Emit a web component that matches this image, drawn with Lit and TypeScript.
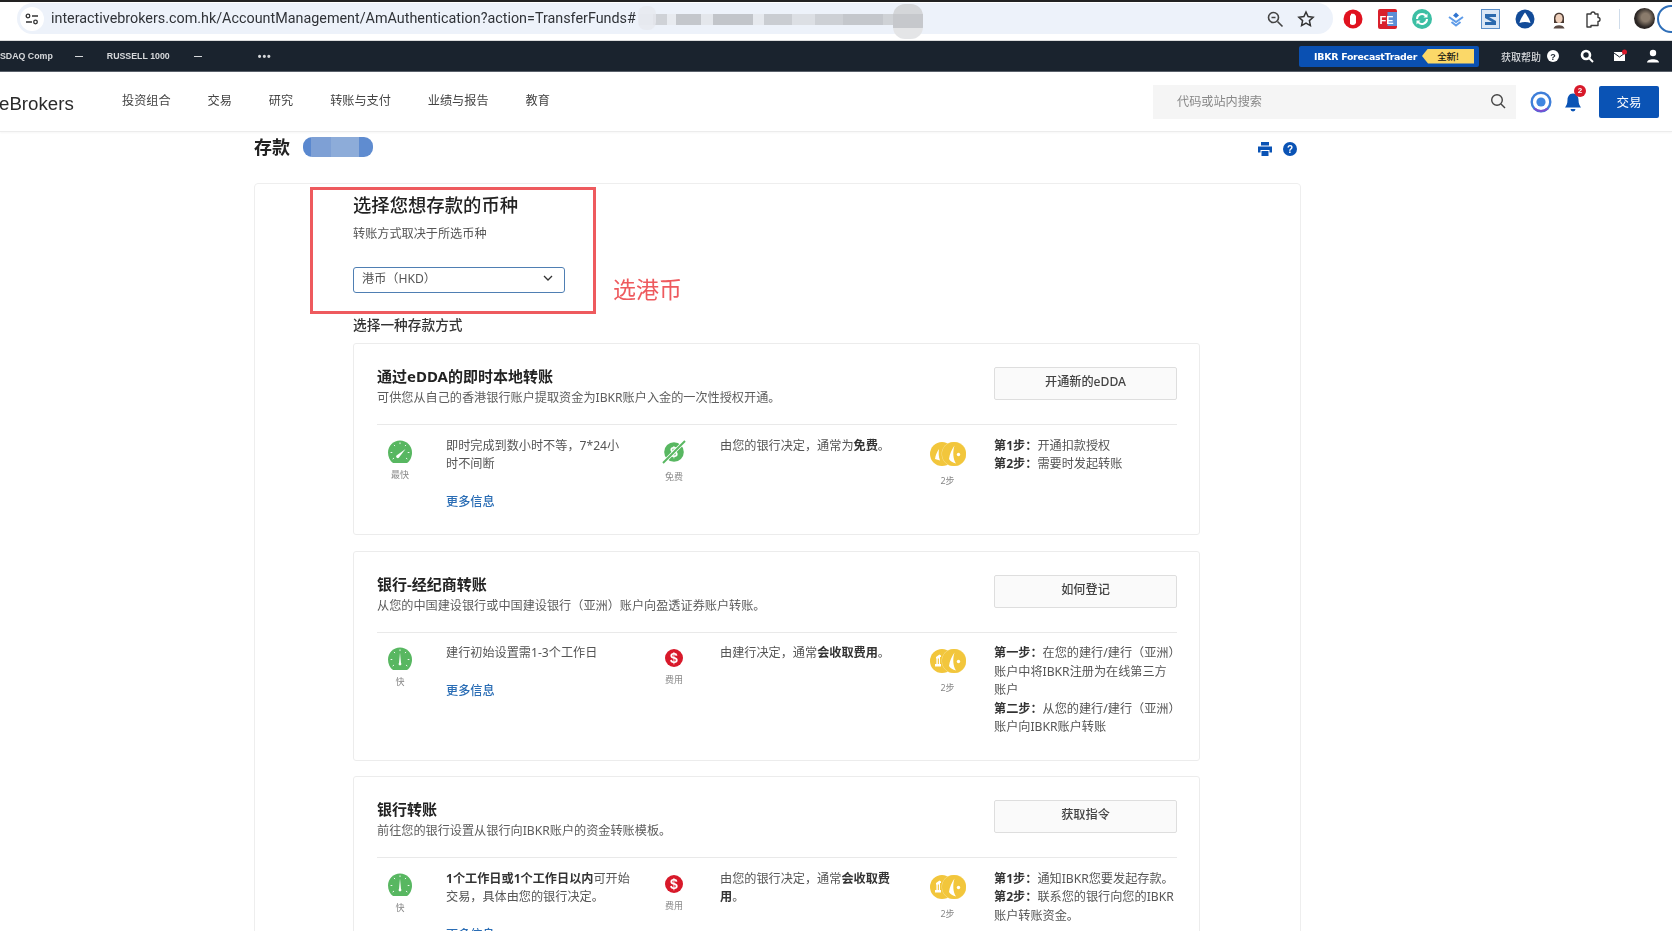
import { LitElement, html, css, svg } from 'lit';
import { customElement } from 'lit/decorators.js';

const speedIcon = (fast: boolean) => html`<svg width="24" height="24" viewBox="0 0 24 24">
  <path d="M5 23 C2 21 0 17 0 12.5 C0 5.6 5.4 0.5 12 0.5 C18.6 0.5 24 5.6 24 12.5 C24 17 22 21 19 23 Z" fill="#58b761" />
  <g stroke="#fff" stroke-width="1" stroke-linecap="round" fill="none" opacity="0.9">
    <path d="M12 2.8v.9M6.2 5.2l.6.6M17.8 5.2l-.6.6M3 12.5h.9M20.1 12.5h.9M5 18.8l.7-.5M19 18.8l-.7-.5" />
  </g>
  ${fast
    ? svg`<path d="M8.5 15.5 L17.5 9 L11 17.5 A1.6 1.6 0 0 1 8.5 15.5 Z" fill="#fff" />`
    : svg`<path d="M11 16 L12 5.5 L13 16 A1.4 1.4 0 1 1 11 16 Z" fill="#fff" />`}
</svg>`;

const freeIcon = html`<svg width="26" height="24" viewBox="0 0 26 24">
  <circle cx="13" cy="12" r="9.8" fill="#58b761" />
  <text x="13" y="17" text-anchor="middle" font-size="14" font-weight="700" font-family="Liberation Sans" fill="#fff">$</text>
  <path d="M2 23 L24 1" stroke="#fff" stroke-width="3.6" />
  <path d="M2 23 L24 1" stroke="#58b761" stroke-width="2" />
</svg>`;

const feeIcon = html`<svg width="18" height="18" viewBox="0 0 18 18">
  <circle cx="9" cy="9" r="9" fill="#d8192a" />
  <text x="9" y="14" text-anchor="middle" font-size="14" font-weight="700" font-family="Liberation Sans" fill="#fff">$</text>
</svg>`;

const coinsIcon = (bank: boolean) => html`<svg width="36" height="24" viewBox="0 0 36 24">
  <circle cx="12" cy="12" r="12" fill="#f2c63c" />
  <circle cx="24" cy="12" r="12.4" fill="#f8e39a" />
  <circle cx="24" cy="12" r="12" fill="#f2c63c" />
  ${bank
    ? svg`<path d="M6 8 L9.5 5.5 L11 6.5 V8 H10 V15 H11 V17.5 H5 V15 H6.4 V9.5 H6 Z M7.8 9.5 V15 H8.9 V9.5 Z" fill="#fff" />`
    : svg`<path d="M9 7 C7 10 5.5 13 5 17 L10 18.5 C8.5 15 8.5 11 9 7 Z" fill="#fff" />`}
  <path d="M24.5 3.5 C22 7 19.5 12 19 17 C20 19 23 21 26 21.5 C23 17 22.5 10 24.5 3.5 Z" fill="#fff" />
  <circle cx="28.5" cy="12.5" r="1.7" fill="#fff" />
</svg>`;

interface Cell {
  icon: unknown;
  label: string;
  kind: string;
  text: unknown;
  link?: boolean;
}

interface Method {
  title: string;
  desc: string;
  action: string;
  cells: Cell[];
}

const methods: Method[] = [
  {
    title: '通过eDDA的即时本地转账',
    desc: '可供您从自己的香港银行账户提取资金为IBKR账户入金的一次性授权开通。',
    action: '开通新的eDDA',
    cells: [
      { icon: speedIcon(true), label: '最快', kind: 'speed', text: html`即时完成到数小时不等，7*24小<br />时不间断`, link: true },
      { icon: freeIcon, label: '免费', kind: 'free', text: html`由您的银行决定，通常为<b>免费</b>。` },
      { icon: coinsIcon(false), label: '2步', kind: 'steps', text: html`<b>第1步：</b>开通扣款授权<br /><b>第2步：</b>需要时发起转账` },
    ],
  },
  {
    title: '银行-经纪商转账',
    desc: '从您的中国建设银行或中国建设银行（亚洲）账户向盈透证券账户转账。',
    action: '如何登记',
    cells: [
      { icon: speedIcon(false), label: '快', kind: 'speed', text: html`建行初始设置需1-3个工作日`, link: true },
      { icon: feeIcon, label: '费用', kind: 'fee', text: html`由建行决定，通常<b>会收取费用</b>。` },
      {
        icon: coinsIcon(true),
        label: '2步',
        kind: 'steps',
        text: html`<b>第一步：</b>在您的建行/建行（亚洲）<br />账户中将IBKR注册为在线第三方<br />账户<br /><b>第二步：</b>从您的建行/建行（亚洲）<br />账户向IBKR账户转账`,
      },
    ],
  },
  {
    title: '银行转账',
    desc: '前往您的银行设置从银行向IBKR账户的资金转账模板。',
    action: '获取指令',
    cells: [
      { icon: speedIcon(false), label: '快', kind: 'speed', text: html`<b>1个工作日或1个工作日以内</b>可开始<br />交易，具体由您的银行决定。`, link: true },
      { icon: feeIcon, label: '费用', kind: 'fee', text: html`由您的银行决定，通常<b>会收取费<br />用</b>。` },
      { icon: coinsIcon(true), label: '2步', kind: 'steps', text: html`<b>第1步：</b>通知IBKR您要发起存款。<br /><b>第2步：</b>联系您的银行向您的IBKR<br />账户转账资金。` },
    ],
  },
];

const extensions = [
  html`<svg width="20" height="20" viewBox="0 0 20 20"><circle cx="10" cy="10" r="9.5" fill="#e0121f" /><path d="M7 15 V7.5 Q7 6 8 6 V5 Q9 3.8 10 5 Q11.5 4.4 12 6 Q13.4 6.4 13 8 V14 Q12 16 10 16 Q8 16 7 15 Z" fill="#fff" /></svg>`,
  html`<svg width="19" height="20" viewBox="0 0 19 20"><rect width="19" height="20" rx="2" fill="#d9202c" /><rect x="9.5" y="3" width="9.5" height="14" fill="#5d8fd6" /><text x="1.6" y="14.5" font-size="11" font-weight="700" font-family="Liberation Sans" fill="#fff">FE</text></svg>`,
  html`<svg width="20" height="20" viewBox="0 0 20 20"><circle cx="10" cy="10" r="10" fill="#3cbfa4" /><path d="M5 10 A5 5 0 0 1 14 7 M15 10 A5 5 0 0 1 6 13" stroke="#fff" stroke-width="2" fill="none" /><path d="M15.5 4.5 V8.5 H11.5 Z M4.5 15.5 V11.5 H8.5 Z" fill="#fff" /></svg>`,
  html`<svg width="20" height="20" viewBox="0 0 20 20"><path d="M3 8 L10 13 L17 8 M5.5 13 L10 16.5 L14.5 13" stroke="#5f9ce8" stroke-width="2" fill="none" /><path d="M10 3.5 L13 6.5 L10 9 L7 6.5 Z" fill="#2f74d0" /></svg>`,
  html`<svg width="19" height="20" viewBox="0 0 19 20"><rect x=".5" y=".5" width="18" height="19" fill="#dbe7f5" stroke="#5b8fc9" /><path d="M4 5 H15 V8 H8 L15 12 V16 H4 V13 H11 L4 9 Z" fill="#2b69ad" /></svg>`,
  html`<svg width="20" height="20" viewBox="0 0 20 20"><circle cx="10" cy="10" r="9.5" fill="#124b98" /><path d="M10 3.5 C12 6 15 11 15.5 14 C12 12.5 8 12.5 4.5 14 C5 11 8 6 10 3.5 Z" fill="#fff" /></svg>`,
  html`<svg width="16" height="20" viewBox="0 0 16 20"><path d="M3 9 C3 2 13 2 13 9 L13 14 H3 Z" fill="#4a3a32" /><ellipse cx="8" cy="9.5" rx="3.6" ry="4.6" fill="#eecfba" /><path d="M2.5 19.5 C3 15 13 15 13.5 19.5 Z" fill="#5a4a44" /></svg>`,
  html`<svg width="20" height="20" viewBox="0 0 20 20"><path d="M4 5 H8 A2 2 0 0 1 12 5 H15 V8.5 A2 2 0 0 1 15 12.5 V16.5 H8 V18 H4 Z" stroke="#3c3c3c" stroke-width="1.4" fill="#fff" stroke-linejoin="round" /></svg>`,
];

@customElement('app-root')
export class AppRoot extends LitElement {
  static styles = css`
    :host {
      display: block;
      width: 1672px;
      height: 931px;
      overflow: hidden;
      background: #fff;
      color: #555;
      font-family: 'Noto Sans', 'Noto Sans CJK SC', sans-serif;
      font-size: 12.15px;
    }
    .shot {
      filter: blur(0.35px);
      height: 931px;
      overflow: hidden;
    }

    /* browser chrome */
    .chrome {
      display: flex;
      align-items: center;
      box-sizing: border-box;
      height: 41px;
      border-top: 2px solid #222;
      border-bottom: 1px solid #dcdcdc;
      padding: 0 0 5px 17px;
      overflow: hidden;
    }
    .pill {
      position: relative;
      display: flex;
      align-items: center;
      box-sizing: border-box;
      width: 1316px;
      height: 31px;
      flex: none;
      border-radius: 16px;
      background: #edf2fa;
      padding: 0 18px 0 3px;
    }
    .tune {
      width: 24px;
      height: 24px;
      border-radius: 50%;
      background: #fff;
      display: flex;
      align-items: center;
      justify-content: center;
      flex: none;
    }
    .url {
      margin-left: 7px;
      font: 14.35px 'Roboto', sans-serif;
      color: #303338;
      white-space: nowrap;
    }
    .pill-tools {
      margin-left: auto;
      display: flex;
      align-items: center;
      gap: 13px;
    }
    .mosaic {
      position: absolute;
      left: 622px;
      top: 0;
      width: 284px;
      height: 31px;
      background: linear-gradient(90deg, #e6e9ef 0 5%, #cfd2d7 5% 10%, #e8ebf0 10% 13%, #c4c7cc 13% 22%, #e4e7ec 22% 26%, #c2c5ca 26% 40%, #e6e9ee 40% 44%, #cacdd2 44% 54%, #dcdfe4 54% 62%, #cdd0d5 62% 72%, #c4c7cc 72% 86%, #cfd2d6 86% 100%) 0 11px / 100% 11px no-repeat;
    }
    .mosaic::before {
      content: '';
      position: absolute;
      left: -1px;
      top: 3px;
      width: 18px;
      height: 24px;
      border-radius: 8px;
      background: #e6e9ef;
      opacity: 0.8;
    }
    .mosaic::after {
      content: '';
      position: absolute;
      right: 0;
      top: 1px;
      width: 30px;
      height: 35px;
      border-radius: 12px;
      background: linear-gradient(#d4d6d9 0 28%, #c6c8cc 28% 68%, #e4e5e7 68%);
    }
    .exts {
      display: flex;
      margin-left: 3px;
      flex: none;
    }
    .ext {
      width: 34.3px;
      display: flex;
      justify-content: center;
      align-items: center;
    }
    .sep {
      width: 1px;
      height: 20px;
      background: #cfdcea;
      margin-left: 9px;
      flex: none;
    }
    .me {
      width: 21px;
      height: 21px;
      border-radius: 50%;
      background: radial-gradient(circle at 55% 45%, #8a7b6c 0 25%, #2b2624 60%);
      margin-left: 14px;
      flex: none;
    }
    .ring {
      width: 28px;
      height: 28px;
      box-sizing: border-box;
      border: 2px solid #2f6fb8;
      border-radius: 50%;
      margin-left: 2px;
      flex: none;
    }

    /* ticker bar */
    .ticker {
      display: flex;
      align-items: center;
      box-sizing: border-box;
      height: 31px;
      padding-right: 12px;
      background: #1a232e;
      border-bottom: 1px solid #59606a;
      color: #d6d8db;
      font: 700 8.8px 'Liberation Sans', sans-serif;
      white-space: nowrap;
    }
    .ticker .cn {
      font: 500 10px 'Noto Sans CJK SC', sans-serif;
    }
    .dash {
      margin-left: 22px;
      width: 8px;
      height: 1px;
      background: #d6d8db;
    }
    .russell {
      margin-left: 24px;
    }
    .dash.second {
      margin-left: 24px;
    }
    .dots {
      margin-left: 56px;
      font-size: 10.5px;
      letter-spacing: 1px;
    }
    .forecast {
      margin-left: auto;
      display: flex;
      align-items: center;
      justify-content: space-between;
      box-sizing: border-box;
      width: 180px;
      height: 21px;
      background: #0a50b2;
      border-radius: 2px;
      padding: 0 5px 0 15px;
      color: #fff;
      font: 700 9.4px 'DejaVu Sans', sans-serif;
      letter-spacing: -0.25px;
    }
    .new-tag {
      display: flex;
      align-items: center;
      justify-content: center;
      width: 52px;
      height: 15px;
      background: #fbd868;
      color: #111;
      font: 500 9.5px 'Noto Sans CJK SC', sans-serif;
      clip-path: polygon(6px 0, 100% 0, 100% 100%, 6px 100%, 0 50%);
    }
    .help-cn {
      margin-left: 22px;
    }
    .ticker-tools {
      display: flex;
      align-items: center;
    }
    .ticker-tools svg {
      flex: none;
    }
    .help-dot { margin-left: 6px; }
    .tool-chat { margin-left: 21px; }
    .tool-mail { margin-left: 19px; }
    .tool-user { margin-left: 19px; }

    /* nav */
    .nav {
      display: flex;
      align-items: center;
      box-sizing: border-box;
      height: 60px;
      border-bottom: 1px solid #ececec;
      box-shadow: 0 1px 2px rgba(0, 0, 0, 0.04);
    }
    .logo {
      font: 18.7px 'Liberation Sans', sans-serif;
      color: #2a2a2a;
      margin: 5px 0 0 -1px;
      width: 123px;
      flex: none;
    }
    .menu {
      display: flex;
      gap: 37px;
      color: #444;
      margin-bottom: 4px;
    }
    .search {
      margin-left: auto;
      display: flex;
      align-items: center;
      justify-content: space-between;
      box-sizing: border-box;
      width: 363px;
      height: 34px;
      background: #f5f5f5;
      padding: 0 10px 1px 24px;
      color: #888;
    }
    .nav-ring {
      margin-left: 14px;
      display: flex;
    }
    .bell {
      position: relative;
      margin-left: 12px;
      display: flex;
    }
    .badge {
      position: absolute;
      top: -7px;
      right: -4px;
      width: 12px;
      height: 12px;
      border-radius: 50%;
      background: #d8192a;
      color: #fff;
      font: 700 8px/12px 'Liberation Sans', sans-serif;
      text-align: center;
    }
    .trade {
      margin: 0 13px 0 17px;
      width: 60px;
      height: 32px;
      border-radius: 2px;
      background: #0a53b5;
      color: #fff;
      display: flex;
      align-items: center;
      justify-content: center;
      font-size: 12.5px;
    }

    /* page */
    .page {
      width: 1047px;
      margin-left: 254px;
    }
    .page-title {
      display: flex;
      align-items: center;
      box-sizing: border-box;
      height: 51px;
      padding: 0 4px 22px 0;
    }
    .page-title h1 {
      margin: 0;
      font-size: 18px;
      line-height: 24px;
      font-weight: 700;
      color: #222;
    }
    .account {
      width: 70px;
      height: 20px;
      margin-left: 13px;
      border-radius: 9px;
      background: linear-gradient(90deg, #5a88cf 0 12%, #7ea0d5 12% 40%, #8dacd9 40% 80%, #5f8cd0 80%);
    }
    .page-tools {
      margin-left: auto;
      display: flex;
      align-items: center;
      gap: 11px;
      padding-top: 5px;
    }
    .panel {
      position: relative;
      box-sizing: border-box;
      border: 1px solid #eee;
      border-radius: 4px;
      padding: 9px 100px 0 98px;
    }
    .panel h2 {
      margin: 0;
      font-size: 18.35px;
      line-height: 24px;
      font-weight: 500;
      color: #222;
    }
    .hint {
      margin-top: 8px;
      line-height: 18px;
      color: #555;
    }
    .select {
      display: flex;
      align-items: center;
      justify-content: space-between;
      box-sizing: border-box;
      width: 212px;
      height: 26px;
      margin-top: 24px;
      padding: 0 11px 4px 8px;
      border: 1px solid #4f7fb3;
      border-radius: 3px;
      color: #555;
    }
    .pick {
      margin-top: 23px;
      line-height: 18px;
      font-size: 13.7px;
      color: #333;
      font-weight: 500;
    }
    .red-box {
      position: absolute;
      left: 55px;
      top: 3px;
      box-sizing: border-box;
      width: 286px;
      height: 127px;
      border: 3px solid #ee5a5e;
    }
    .note {
      position: absolute;
      left: 358px;
      top: 89px;
      font-size: 23px;
      line-height: 32px;
      color: #ee5a5e;
    }
    .method {
      box-sizing: border-box;
      border: 1px solid #ececec;
      border-radius: 3px;
      margin-top: 15.5px;
      padding: 22px 22px 23px 23px;
    }
    .method.first {
      margin-top: 9px;
    }
    .head {
      display: flex;
      justify-content: space-between;
      align-items: flex-start;
      padding-bottom: 17px;
      border-bottom: 1px solid #e9e9e9;
    }
    .head h3 {
      margin: 0;
      font-size: 15px;
      line-height: 20px;
      font-weight: 700;
      color: #222;
    }
    .head p {
      margin: 3px 0 0;
      line-height: 18px;
      color: #5c5c5c;
    }
    .action {
      box-sizing: border-box;
      width: 183px;
      height: 33px;
      margin-top: 1px;
      border: 1px solid #dedede;
      border-radius: 2px;
      background: #fafafa;
      color: #444;
      font-weight: 500;
      text-align: center;
      line-height: 28px;
    }
    .row {
      display: grid;
      grid-template-columns: 46px 182px 46px 181px 47px 1fr;
      column-gap: 23px;
      padding-top: 11.5px;
    }
    .badge-cell {
      display: flex;
      flex-direction: column;
      align-items: center;
      font-size: 9px;
      line-height: 12px;
      color: #888;
    }
    .badge-cell span {
      display: block;
    }
    .speed { padding-top: 3px; gap: 5px; }
    .free { padding-top: 3px; gap: 7px; }
    .fee { padding-top: 5px; gap: 7px; }
    .steps { padding-top: 5px; gap: 9px; }
    .text {
      line-height: 18.5px;
      white-space: nowrap;
    }
    .text b {
      font-weight: 700;
      color: #333;
    }
    .more {
      display: block;
      margin-top: 19px;
      line-height: 18.5px;
      color: #2a6db5;
      font-weight: 500;
    }
  `;

  renderCell(c: Cell) {
    return html`
      <div class="badge-cell ${c.kind}">${c.icon}<span>${c.label}</span></div>
      <div class="text">
        ${c.text}${c.link ? html`<a class="more">更多信息</a>` : ''}
      </div>
    `;
  }

  renderMethod(m: Method, i: number) {
    return html`<section class="method ${i === 0 ? 'first' : ''}">
      <div class="head">
        <div>
          <h3>${m.title}</h3>
          <p>${m.desc}</p>
        </div>
        <div class="action">${m.action}</div>
      </div>
      <div class="row">${m.cells.map((c) => this.renderCell(c))}</div>
    </section>`;
  }

  render() {
    return html`<div class="shot">
      <div class="chrome">
        <div class="pill">
          <span class="tune">
            <svg width="14" height="12" viewBox="0 0 14 12" fill="none" stroke="#333" stroke-width="1.3">
              <circle cx="3" cy="3" r="1.8" /><path d="M7 3h6M1 9h6" /><circle cx="10.5" cy="9" r="1.8" />
            </svg>
          </span>
          <span class="url">interactivebrokers.com.hk/AccountManagement/AmAuthentication?action=TransferFunds#</span>
          <div class="mosaic"></div>
          <div class="pill-tools">
            <svg width="18" height="18" viewBox="0 0 18 18" fill="none" stroke="#444" stroke-width="1.6">
              <circle cx="7.5" cy="7.5" r="5" /><path d="M5.5 7.5h4M11.5 11.5l5 5" />
            </svg>
            <svg width="18" height="18" viewBox="0 0 18 18" fill="none" stroke="#333" stroke-width="1.5">
              <path d="M9 2l2.1 4.6 5 .6-3.7 3.4 1 5L9 13.1 4.6 15.6l1-5L1.9 7.2l5-.6z" />
            </svg>
          </div>
        </div>
        <div class="exts">${extensions.map((e) => html`<span class="ext">${e}</span>`)}</div>
        <span class="sep"></span>
        <span class="me"></span>
        <span class="ring"></span>
      </div>

      <div class="ticker">
        <span>SDAQ Comp</span>
        <span class="dash"></span>
        <span class="russell">RUSSELL 1000</span>
        <span class="dash second"></span>
        <span class="dots">•••</span>
        <div class="forecast">
          IBKR ForecastTrader
          <span class="new-tag">全新!</span>
        </div>
        <span class="cn help-cn">获取帮助</span>
        <div class="ticker-tools">
          <svg class="help-dot" width="12" height="12" viewBox="0 0 12 12">
            <circle cx="6" cy="6" r="6" fill="#fff" />
            <text x="6" y="9.5" text-anchor="middle" font-size="9" font-weight="700" font-family="Liberation Sans" fill="#1a232e">?</text>
          </svg>
          <svg class="tool-chat" width="14" height="14" viewBox="0 0 14 14">
            <circle cx="6" cy="6" r="4" fill="none" stroke="#fff" stroke-width="2.6" />
            <path d="M9 9l4 4" stroke="#fff" stroke-width="2" />
          </svg>
          <svg class="tool-mail" width="14" height="14" viewBox="0 0 14 14">
            <rect x="1" y="3" width="11" height="9" fill="#fff" />
            <path d="M1 4l5.5 4L12 4" stroke="#1a232e" fill="none" />
            <circle cx="11.5" cy="3" r="2.5" fill="#d8192a" />
          </svg>
          <svg class="tool-user" width="14" height="14" viewBox="0 0 14 14" fill="#fff">
            <circle cx="7" cy="4" r="3.2" /><path d="M1 13.5 C1 9 13 9 13 13.5 Z" />
          </svg>
        </div>
      </div>

      <div class="nav">
        <span class="logo">eBrokers</span>
        <div class="menu">
          <span>投资组合</span><span>交易</span><span>研究</span><span>转账与支付</span><span>业绩与报告</span><span>教育</span>
        </div>
        <div class="search">
          <span>代码或站内搜索</span>
          <svg width="16" height="16" viewBox="0 0 16 16" fill="none" stroke="#444" stroke-width="1.4">
            <circle cx="7" cy="7" r="5.3" /><path d="M11 11l4 4" />
          </svg>
        </div>
        <span class="nav-ring">
          <svg width="22" height="22" viewBox="0 0 22 22" fill="none">
            <circle cx="11" cy="11" r="9.3" stroke="#3f7fd9" stroke-width="2.4" />
            <path d="M4.5 17.5 A9.3 9.3 0 0 0 17.5 17.5" stroke="#7a4fd0" stroke-width="2.4" />
            <circle cx="11" cy="11" r="4.6" fill="#3f86e0" />
          </svg>
        </span>
        <span class="bell">
          <svg width="18" height="20" viewBox="0 0 18 20" fill="#0a53b5">
            <path d="M9 1.5 C5 1.5 3.5 5 3.5 8 C3.5 12 2 14 1 15.5 H17 C16 14 14.5 12 14.5 8 C14.5 5 13 1.5 9 1.5 Z" />
            <path d="M6.5 17 A2.5 2.5 0 0 0 11.5 17 Z" />
          </svg>
          <span class="badge">2</span>
        </span>
        <div class="trade">交易</div>
      </div>

      <div class="page">
        <div class="page-title">
          <h1>存款</h1>
          <span class="account"></span>
          <div class="page-tools">
            <svg width="14" height="14" viewBox="0 0 14 14" fill="#0a53b5">
              <path d="M3 0h8v3.500H3zM0 4.500h14V10.500h-2.500V8h-9v2.500H0zM3.500 9h7v5h-7z" />
            </svg>
            <svg width="14" height="14" viewBox="0 0 14 14">
              <circle cx="7" cy="7" r="7" fill="#0a53b5" />
              <text x="7" y="10.5" text-anchor="middle" font-size="10" font-weight="700" font-family="Liberation Sans" fill="#fff">?</text>
            </svg>
          </div>
        </div>

        <div class="panel">
          <h2>选择您想存款的币种</h2>
          <div class="hint">转账方式取决于所选币种</div>
          <div class="select">
            <span>港币（HKD）</span>
            <svg width="10" height="6" viewBox="0 0 10 6" fill="none" stroke="#333" stroke-width="1.3">
              <path d="M1 1l4 4 4-4" />
            </svg>
          </div>
          <div class="pick">选择一种存款方式</div>
          ${methods.map((m, i) => this.renderMethod(m, i))}
          <div class="red-box"></div>
          <div class="note">选港币</div>
        </div>
      </div>
    </div>`;
  }
}
